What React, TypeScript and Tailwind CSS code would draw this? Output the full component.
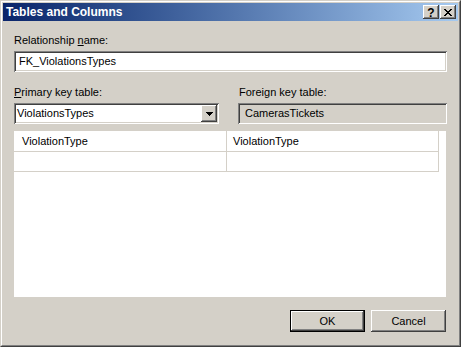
import React from "react";

const raised =
  "shadow-[inset_-1px_-1px_#404040,inset_1px_1px_#ffffff,inset_-2px_-2px_#808080,inset_2px_2px_#d4d0c8]";
const sunken =
  "shadow-[inset_1px_1px_#808080,inset_-1px_-1px_#ffffff,inset_2px_2px_#404040,inset_-2px_-2px_#d4d0c8]";

function TitleButton({ children }: { children: React.ReactNode }) {
  return (
    <div className={`w-[16px] h-[14px] bg-[#d4d0c8] flex items-center justify-center ${raised}`}>
      {children}
    </div>
  );
}

export default function App() {
  return (
    <div className="w-[461px] h-[347px] bg-[#d4d0c8] border border-t-[#d4d0c8] border-l-[#d4d0c8] border-r-[#404040] border-b-[#404040] font-['Liberation_Sans',Arial,sans-serif] text-[11px] leading-[13px] text-black">
      <div className="w-full h-full border border-t-white border-l-white border-r-[#808080] border-b-[#808080] p-px flex flex-col">
        {/* Title bar */}
        <div className="h-[18px] shrink-0 flex items-center bg-linear-to-r from-[#0a246a] to-[#a6caf0] pl-[3px] pr-[2px]">
          <span className="text-white font-bold text-[12px] leading-[14px] flex-1">Tables and Columns</span>
          <div className="flex items-center gap-[1px]">
            <TitleButton>
              <span className="font-bold text-[12px] leading-none text-black mt-[1px]">?</span>
            </TitleButton>
            <TitleButton>
              <svg width="8" height="7" viewBox="0 0 8 7" shapeRendering="crispEdges">
                <path d="M0 0h2v1h-2zM6 0h2v1h-2zM1 1h2v1h-2zM5 1h2v1h-2zM2 2h4v1h-4zM3 3h2v1h-2zM2 4h4v1h-4zM1 5h2v1h-2zM5 5h2v1h-2zM0 6h2v1h-2zM6 6h2v1h-2z" fill="#000" />
              </svg>
            </TitleButton>
          </div>
        </div>

        {/* Body */}
        <div className="flex-1 flex flex-col px-[11px]">
          <div className="mt-[13px] h-[13px]">
            Relationship <span className="underline underline-offset-1">n</span>ame:
          </div>
          <div className={`mt-[4px] h-[21px] w-[433px] bg-white flex items-center pl-[5px] ${sunken}`}>
            FK_ViolationsTypes
          </div>

          <div className="mt-[14px] flex gap-[19px]">
            <div className="w-[205px] flex flex-col">
              <div className="h-[13px]">
                <span className="underline underline-offset-1">P</span>rimary key table:
              </div>
              <div className={`mt-[4px] h-[21px] bg-white flex items-center p-[2px] ${sunken}`}>
                <div className="flex-1 pl-[1px]">ViolationsTypes</div>
                <div className={`w-[16px] h-[17px] bg-[#d4d0c8] flex items-center justify-center ${raised}`}>
                  <svg width="7" height="4" viewBox="0 0 7 4" shapeRendering="crispEdges">
                    <path d="M0 0h7v1h-7zM1 1h5v1h-5zM2 2h3v1h-3zM3 3h1v1h-1z" fill="#000" />
                  </svg>
                </div>
              </div>
            </div>
            <div className="w-[209px] flex flex-col">
              <div className="h-[13px] pl-[1px]">Foreign key table:</div>
              <div className={`mt-[4px] h-[21px] bg-[#d4d0c8] flex items-center pl-[7px] ${sunken}`}>
                CamerasTickets
              </div>
            </div>
          </div>

          {/* Grid */}
          <div className="mt-[7px] w-[432px] h-[166px] bg-white">
            <div className="w-[425px]">
              <div className="flex h-[21px]">
                <div className="w-[213px] border-r border-b border-[#d4d0c8] flex items-center pl-[8px]">ViolationType</div>
                <div className="w-[212px] border-r border-b border-[#d4d0c8] flex items-center pl-[6px]">ViolationType</div>
              </div>
              <div className="flex h-[20px]">
                <div className="w-[213px] border-r border-b border-[#d4d0c8]" />
                <div className="w-[212px] border-r border-b border-[#d4d0c8]" />
              </div>
            </div>
          </div>

          {/* Buttons */}
          <div className="mt-[13px] w-[432px] flex justify-end gap-[6px]">
            <div className="w-[75px] h-[22px] border border-black">
              <div className={`w-full h-full bg-[#d4d0c8] flex items-center justify-center ${raised}`}>OK</div>
            </div>
            <div className={`w-[75px] h-[22px] bg-[#d4d0c8] flex items-center justify-center ${raised}`}>Cancel</div>
          </div>
        </div>
      </div>
    </div>
  );
}
